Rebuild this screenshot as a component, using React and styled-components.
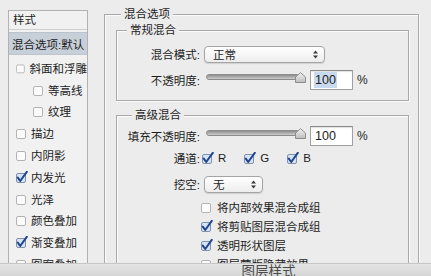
import React from 'react'
import styled, { createGlobalStyle } from 'styled-components'

const font = `"Lucida Grande", "Liberation Sans", "Noto Sans CJK SC", sans-serif`

const Global = createGlobalStyle`
  html, body {
    margin: 0;
    padding: 0;
    background: #ececec;
    overflow: hidden;
  }
  body {
    font-family: ${font};
    font-size: 11.5px;
    color: #1d1d1d;
  }
`

const Window = styled.div`
  width: 431px;
  height: 276px;
  display: grid;
  grid-template-rows: 263px 1fr;
  overflow: hidden;
`

const Content = styled.div`
  display: flex;
  align-items: flex-start;
  padding-left: 8px;
  overflow: hidden;
`

const Sidebar = styled.div`
  margin-top: 10px;
  width: 80px;
  height: 300px;
  box-sizing: border-box;
  border: 1px solid #b2b2b2;
  background: #f1f1f1;
  flex-shrink: 0;
`

const SideHeader = styled.div`
  height: 19px;
  padding: 0 0 2px 4px;
  box-sizing: border-box;
  display: flex;
  align-items: center;
  border-bottom: 1px solid #cfcfcf;
  margin-bottom: 2px;
`

const SideSelected = styled.div`
  height: 21px;
  display: flex;
  align-items: center;
  padding-left: 3px;
  background: #c7cfd9;
  border-top: 1px solid #b9c2cd;
  border-bottom: 1px solid #bcc4ce;
  margin-bottom: 2px;
  white-space: nowrap;
`

const SideItem = styled.div`
  height: 21.8px;
  display: flex;
  align-items: center;
  gap: 3px;
  padding-left: ${p => (p.$sub ? 24 : 7)}px;
  white-space: nowrap;
`

const Main = styled.div`
  margin-left: 16px;
  margin-top: 14px;
  width: 315px;
  flex-shrink: 0;
`

const Group = styled.div`
  margin-top: ${p => p.$top || 0}px;
  padding: 0 ${p => p.$padR || 0}px ${p => p.$padB || 0}px ${p => p.$padL || 0}px;
  border: 1px solid #a9a9a9;
  box-shadow: inset 1px 1px 0 #fbfbfb, 1px 1px 0 #fbfbfb;
  height: ${p => (p.$h ? `${p.$h}px` : 'auto')};
  box-sizing: border-box;
`

const Legend = styled.div`
  width: fit-content;
  margin: -8px 0 0 ${p => p.$offset}px;
  padding: 0 3px;
  line-height: 14px;
  height: 14px;
  background: #ececec;
  white-space: nowrap;
`

const Row = styled.div`
  display: flex;
  align-items: center;
  height: ${p => p.$h}px;
  margin-top: ${p => p.$mt}px;
`

const Label = styled.div`
  width: 84px;
  flex-shrink: 0;
  text-align: right;
  padding-right: 1px;
  box-sizing: border-box;
  white-space: nowrap;
`

const Select = styled.div`
  width: ${p => p.$w}px;
  height: 17px;
  box-sizing: border-box;
  margin-left: 3px;
  border: 1px solid #a4a4a4;
  border-radius: 4px;
  background: linear-gradient(#ffffff, #ededed);
  box-shadow: 0 1px 1px rgba(0, 0, 0, 0.12);
  display: flex;
  align-items: center;
  justify-content: space-between;
  padding: 0 6px 0 8px;
`

const Slider = styled.div`
  position: relative;
  margin-left: 2px;
  width: 105px;
  height: 20px;
  flex-shrink: 0;
`

const Track = styled.div`
  position: absolute;
  left: 3px;
  right: 8px;
  top: 4px;
  height: 4px;
  border: 1px solid #8c8c8c;
  border-radius: 3px;
  background: linear-gradient(#8e8e8e, #cdcdcd);
`

const Thumb = styled.svg`
  position: absolute;
  left: 92px;
  top: 2px;
`

const NumberBox = styled.div`
  margin-left: 2px;
  width: 43px;
  height: 20px;
  box-sizing: border-box;
  border: 1px solid #a0a0a0;
  border-top-color: #8a8a8a;
  background: #fff;
  box-shadow: inset 0 1px 1px rgba(0, 0, 0, 0.12);
  display: flex;
  align-items: center;
  padding-left: 3px;
  font-size: 12.5px;
`

const Value = styled.span`
  padding: 1px 1px;
  background: ${p => (p.$selected ? '#c9d9ee' : 'transparent')};
`

const Percent = styled.span`
  margin-left: 4px;
  font-size: 12px;
`

const Channels = styled.div`
  display: flex;
  align-items: center;
  gap: 18px;
  margin-left: 1px;
`

const Check = styled.label`
  display: flex;
  align-items: center;
  gap: 4px;
  white-space: nowrap;
`

const CheckList = styled.div`
  padding-left: 84px;
  margin-top: 4px;
`

const CheckRow = styled.div`
  height: 19px;
  display: flex;
  align-items: center;
`

const TitleBar = styled.div`
  border-top: 1px solid #c6c6c6;
  background: linear-gradient(#e4e4e4, #d6d6d6);
  display: flex;
  justify-content: center;
  padding-left: 106px;
  font-size: 13.5px;
  line-height: 16px;
  color: #4a4a4a;
  overflow: hidden;
`

function Box({ checked }) {
  return (
    <svg width="12" height="12" viewBox="0 0 12 12">
      <rect x="0.5" y="2.5" width="9" height="9" rx="1.5"
        fill={checked ? '#d6e4f5' : '#fbfbfb'} stroke={checked ? '#7f93ad' : '#b3b3b3'} />
      {checked && (
        <path d="M1.8 6.6 L4.2 10 L10.8 0.8" fill="none" stroke="#22458f"
          strokeWidth="2" strokeLinecap="round" strokeLinejoin="round" />
      )}
    </svg>
  )
}

function Arrows() {
  return (
    <svg width="5" height="9" viewBox="0 0 5 9">
      <path d="M0 3.6 L2.5 0.4 L5 3.6 Z M0 5.4 L2.5 8.6 L5 5.4 Z" fill="#3a3a3a" />
    </svg>
  )
}

function Opacity({ selected }) {
  return (
    <>
      <Slider>
        <Track />
        <Thumb width="11" height="11" viewBox="0 0 11 11">
          <defs>
            <linearGradient id="tg" x1="0" y1="0" x2="0" y2="1">
              <stop offset="0" stopColor="#f2f2f2" />
              <stop offset="1" stopColor="#bdbdbd" />
            </linearGradient>
          </defs>
          <path d="M0.5 5 L5.5 0.6 L10.5 5 L10.5 10.5 L0.5 10.5 Z" fill="url(#tg)" stroke="#8e8e8e" />
        </Thumb>
      </Slider>
      <NumberBox><Value $selected={selected}>100</Value></NumberBox>
      <Percent>%</Percent>
    </>
  )
}

const styles = [
  { name: '斜面和浮雕' },
  { name: '等高线', sub: true },
  { name: '纹理', sub: true },
  { name: '描边' },
  { name: '内阴影' },
  { name: '内发光', on: true },
  { name: '光泽' },
  { name: '颜色叠加' },
  { name: '渐变叠加', on: true },
  { name: '图案叠加' },
  { name: '外发光' },
]

const options = [
  { name: '将内部效果混合成组' },
  { name: '将剪贴图层混合成组', on: true },
  { name: '透明形状图层', on: true },
  { name: '图层蒙版隐藏效果' },
  { name: '矢量蒙版隐藏效果' },
]

export default function App() {
  return (
    <Window>
      <Global />
      <Content>
        <Sidebar>
          <SideHeader>样式</SideHeader>
          <SideSelected>混合选项:默认</SideSelected>
          {styles.map(s => (
            <SideItem key={s.name} $sub={s.sub}>
              <Box checked={s.on} />
              {s.name}
            </SideItem>
          ))}
        </Sidebar>
        <Main>
          <Group $padL={11} $padR={9} $h={320}>
            <Legend $offset={5}>混合选项</Legend>
            <Group $top={9} $padB={10}>
              <Legend $offset={10}>常规混合</Legend>
              <Row $h={18} $mt={8}>
                <Label>混合模式:</Label>
                <Select $w={121}>正常<Arrows /></Select>
              </Row>
              <Row $h={20} $mt={7}>
                <Label>不透明度:</Label>
                <Opacity selected />
              </Row>
            </Group>
            <Group $top={14} $h={200}>
              <Legend $offset={15}>高级混合</Legend>
              <Row $h={20} $mt={4}>
                <Label>填充不透明度:</Label>
                <Opacity />
              </Row>
              <Row $h={16} $mt={4}>
                <Label>通道:</Label>
                <Channels>
                  <Check><Box checked />R</Check>
                  <Check><Box checked />G</Check>
                  <Check><Box checked />B</Check>
                </Channels>
              </Row>
              <Row $h={18} $mt={9}>
                <Label>挖空:</Label>
                <Select $w={59}>无<Arrows /></Select>
              </Row>
              <CheckList>
                {options.map(o => (
                  <CheckRow key={o.name}>
                    <Check><Box checked={o.on} />{o.name}</Check>
                  </CheckRow>
                ))}
              </CheckList>
            </Group>
          </Group>
        </Main>
      </Content>
      <TitleBar>图层样式</TitleBar>
    </Window>
  )
}
